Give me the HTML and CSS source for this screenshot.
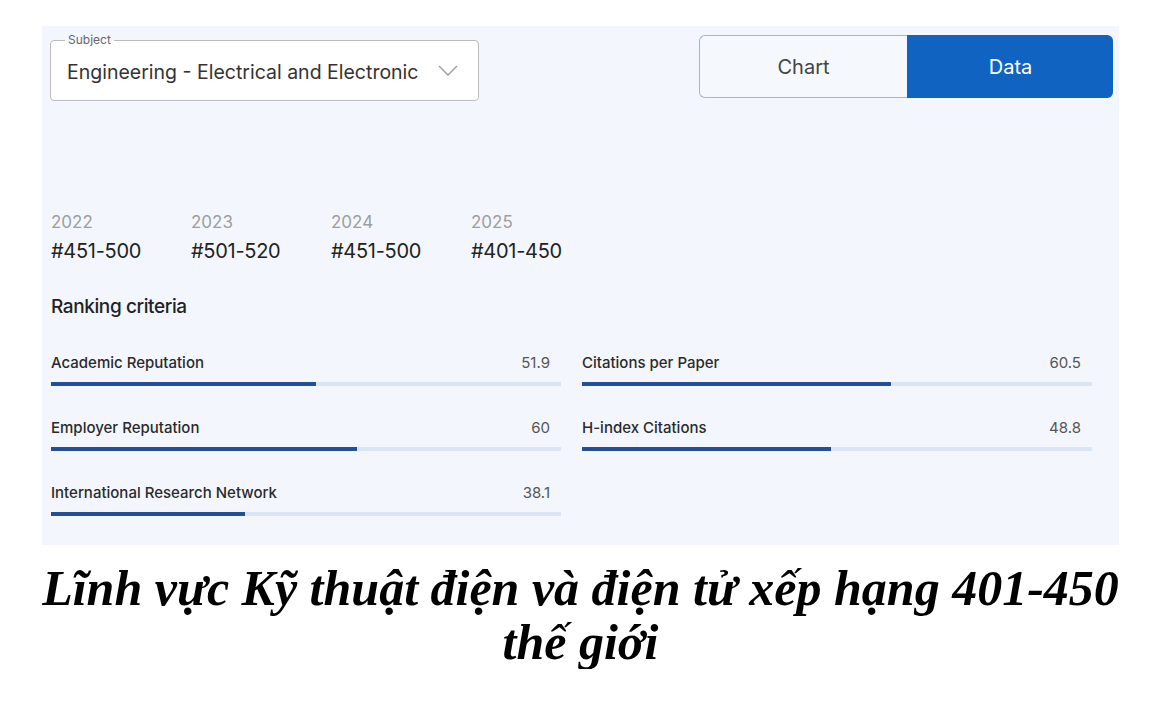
FILE: index.html
```html
<!DOCTYPE html>
<html lang="vi">

<head>
    <meta charset="UTF-8">
    <meta name="viewport" content="width=device-width, initial-scale=1.0">
    <title>Subject Ranking</title>
    <link rel="stylesheet" href="styles.css">
</head>

<body>
    <div class="panel">
        <div class="top-row">
            <fieldset class="subject-select">
                <legend>Subject</legend>
                <div class="select-value">
                    <span>Engineering - Electrical and Electronic</span>
                    <svg class="chevron" width="20" height="11" viewBox="0 0 20 11">
                        <path d="M1 1 L10 10 L19 1" fill="none" stroke="#9a9a9a" stroke-width="1.3" />
                    </svg>
                </div>
            </fieldset>

            <div class="toggle">
                <button class="toggle-btn">Chart</button>
                <button class="toggle-btn active">Data</button>
            </div>
        </div>

        <!-- Rankings by year -->
        <div class="years">
            <div class="year">
                <div class="year-label">2022</div>
                <div class="year-rank">#451-500</div>
            </div>
            <div class="year">
                <div class="year-label">2023</div>
                <div class="year-rank">#501-520</div>
            </div>
            <div class="year">
                <div class="year-label">2024</div>
                <div class="year-rank">#451-500</div>
            </div>
            <div class="year">
                <div class="year-label">2025</div>
                <div class="year-rank">#401-450</div>
            </div>
        </div>

        <h2 class="criteria-title">Ranking criteria</h2>

        <div class="criteria">
            <div class="criterion">
                <div class="criterion-head">
                    <span class="criterion-name">Academic Reputation</span>
                    <span class="criterion-score">51.9</span>
                </div>
                <div class="bar"><div class="bar-fill" style="width: 51.9%"></div></div>
            </div>
            <div class="criterion">
                <div class="criterion-head">
                    <span class="criterion-name">Citations per Paper</span>
                    <span class="criterion-score">60.5</span>
                </div>
                <div class="bar"><div class="bar-fill" style="width: 60.5%"></div></div>
            </div>
            <div class="criterion">
                <div class="criterion-head">
                    <span class="criterion-name">Employer Reputation</span>
                    <span class="criterion-score">60</span>
                </div>
                <div class="bar"><div class="bar-fill" style="width: 60%"></div></div>
            </div>
            <div class="criterion">
                <div class="criterion-head">
                    <span class="criterion-name">H-index Citations</span>
                    <span class="criterion-score">48.8</span>
                </div>
                <div class="bar"><div class="bar-fill" style="width: 48.8%"></div></div>
            </div>
            <div class="criterion">
                <div class="criterion-head">
                    <span class="criterion-name">International Research Network</span>
                    <span class="criterion-score">38.1</span>
                </div>
                <div class="bar"><div class="bar-fill" style="width: 38.1%"></div></div>
            </div>
        </div>
    </div>

    <p class="caption">Lĩnh vực Kỹ thuật điện và điện tử xếp hạng 401-450<br>thế giới</p>
</body>

</html>
```

FILE: styles.css
```css
body {
    margin: 0;
    background-color: #ffffff;
    font-family: Inter, "Noto Sans", sans-serif;
    color: #222;
}

.panel {
    width: 1077px;
    margin: 26px 0 0 42px;
    padding: 7px 6px 29px 8px;
    box-sizing: border-box;
    background-color: #f3f7fd;
}

.top-row {
    display: flex;
    justify-content: space-between;
    align-items: flex-start;
}

.subject-select {
    width: 429px;
    height: 68px;
    margin: 0;
    padding: 0 20px 0 14px;
    box-sizing: border-box;
    border: 1px solid #bcbcbc;
    border-radius: 4px;
    background-color: #fff;
}

.subject-select legend {
    padding: 0 3px;
    font-size: 12px;
    line-height: 14px;
    color: #666;
}

.select-value {
    display: flex;
    justify-content: space-between;
    align-items: center;
    height: 45px;
    padding: 4px 0 0 2px;
    box-sizing: border-box;
    font-size: 19.5px;
    color: #333;
}

.chevron {
    margin-top: -2px;
}

.toggle {
    display: flex;
    margin-top: 2px;
    width: 414px;
    height: 63px;
}

.toggle-btn {
    flex: 1;
    font-family: inherit;
    font-size: 20px;
    color: #444;
    background-color: #f5f9fd;
    border: 1px solid #9fb6cc;
    border-right: none;
    border-radius: 6px 0 0 6px;
    cursor: pointer;
}

.toggle-btn.active {
    flex: 0 0 206px;
    color: #fff;
    background-color: #1163c2;
    border-color: #1163c2;
    border-radius: 0 6px 6px 0;
}

.years {
    display: flex;
    margin-top: 110px;
    padding-left: 1px;
}

.year {
    width: 140px;
}

.year-label {
    font-size: 17px;
    line-height: 22px;
    color: #9e9e9e;
}

.year-rank {
    margin-top: 6px;
    font-size: 20px;
    line-height: 24px;
    color: #222;
    letter-spacing: -0.3px;
}

.criteria-title {
    margin: 32px 0 0 1px;
    font-size: 19px;
    line-height: 24px;
    font-weight: 500;
    letter-spacing: -0.4px;
    color: #222;
}

.criteria {
    display: grid;
    grid-template-columns: 510px 510px;
    column-gap: 21px;
    row-gap: 32px;
    margin: 34px 0 0 1px;
}

.criterion-head {
    display: flex;
    justify-content: space-between;
    padding-right: 11px;
    font-size: 15px;
    line-height: 20px;
}

.criterion-name {
    font-weight: 500;
    color: #2a2a2a;
}

.criterion-score {
    color: #555;
}

.bar {
    height: 4px;
    margin-top: 9px;
    background-color: #dae6f6;
}

.bar-fill {
    height: 100%;
    background-color: #234f97;
}

.caption {
    width: 1077px;
    margin: 16px 0 0 42px;
    font-family: "Liberation Serif", "Times New Roman", serif;
    font-size: 50px;
    line-height: 54px;
    font-weight: bold;
    font-style: italic;
    text-align: center;
    color: #000;
}
```
